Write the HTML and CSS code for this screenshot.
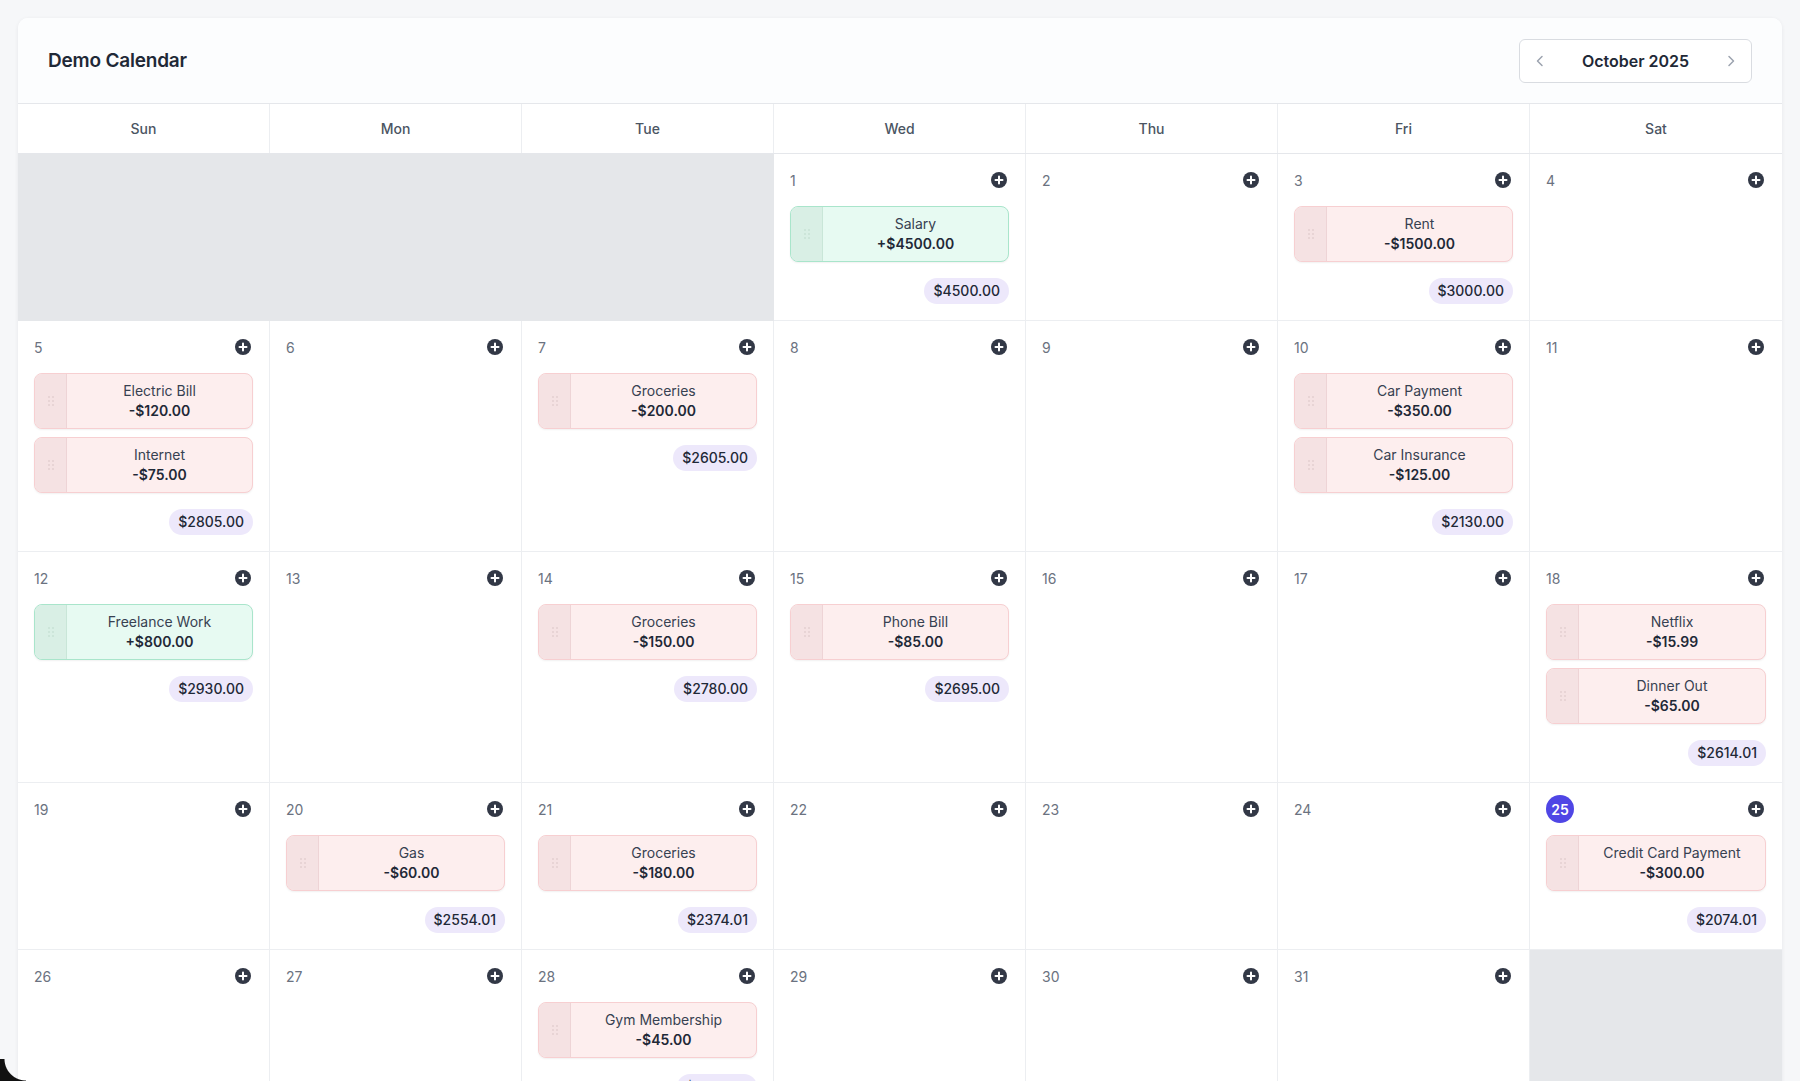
FILE: index.html
```html
<!DOCTYPE html>
<html lang="en">
<head>
    <meta charset="UTF-8">
    <meta name="viewport" content="width=device-width, initial-scale=1.0">
    <title>Demo Calendar</title>
    <link rel="stylesheet" href="styles.css">
</head>
<body>
    <div class="page">
        <div class="calendar">
            <header class="cal-header">
                <h1 class="cal-title">Demo Calendar</h1>
                <div class="month-nav">
                    <button class="nav-btn" aria-label="Previous month">
                        <svg width="14" height="14" viewBox="0 0 14 14"><polyline points="9,2.5 4.5,7 9,11.5" fill="none" stroke="#9ca3af" stroke-width="1.5" stroke-linecap="round" stroke-linejoin="round"/></svg>
                    </button>
                    <span class="month-label">October 2025</span>
                    <button class="nav-btn" aria-label="Next month">
                        <svg width="14" height="14" viewBox="0 0 14 14"><polyline points="5,2.5 9.5,7 5,11.5" fill="none" stroke="#9ca3af" stroke-width="1.5" stroke-linecap="round" stroke-linejoin="round"/></svg>
                    </button>
                </div>
            </header>

            <div class="weekdays">
                <div class="weekday">Sun</div>
                <div class="weekday">Mon</div>
                <div class="weekday">Tue</div>
                <div class="weekday">Wed</div>
                <div class="weekday">Thu</div>
                <div class="weekday">Fri</div>
                <div class="weekday">Sat</div>
            </div>

            <div class="month-grid" id="grid"></div>
        </div>
    </div>
    <div class="screen-corner"></div>

    <script>
        const events = {
            1: [["Salary", 4500]],
            3: [["Rent", -1500]],
            5: [["Electric Bill", -120], ["Internet", -75]],
            7: [["Groceries", -200]],
            10: [["Car Payment", -350], ["Car Insurance", -125]],
            12: [["Freelance Work", 800]],
            14: [["Groceries", -150]],
            15: [["Phone Bill", -85]],
            18: [["Netflix", -15.99], ["Dinner Out", -65]],
            20: [["Gas", -60]],
            21: [["Groceries", -180]],
            25: [["Credit Card Payment", -300]],
            28: [["Gym Membership", -45]]
        };
        const today = 25;
        const firstWeekday = 3;
        const daysInMonth = 31;

        const plusIcon = '<svg width="16" height="16" viewBox="0 0 16 16"><circle cx="8" cy="8" r="8" fill="#323846"/><path d="M8 4.5v7M4.5 8h7" stroke="#fff" stroke-width="2" stroke-linecap="round"/></svg>';
        const gripIcon = '<svg width="6" height="10" viewBox="0 0 6 10"><g fill="currentColor"><circle cx="1" cy="1" r="0.8"/><circle cx="5" cy="1" r="0.8"/><circle cx="1" cy="5" r="0.8"/><circle cx="5" cy="5" r="0.8"/><circle cx="1" cy="9" r="0.8"/><circle cx="5" cy="9" r="0.8"/></g></svg>';

        const money = v => (v < 0 ? "-$" : "+$") + Math.abs(v).toFixed(2);

        const grid = document.getElementById("grid");
        let balance = 0;
        let html = "";

        for (let i = 0; i < firstWeekday; i++) {
            html += '<div class="cell empty"></div>';
        }

        for (let day = 1; day <= daysInMonth; day++) {
            const list = events[day] || [];
            const dayClass = day === today ? "day-num today" : "day-num";
            html += '<div class="cell">';
            html += '<div class="cell-head"><span class="' + dayClass + '">' + day + '</span><button class="add-btn" aria-label="Add">' + plusIcon + '</button></div>';
            if (list.length) {
                html += '<div class="events">';
                for (const [name, amount] of list) {
                    balance += amount;
                    const kind = amount < 0 ? "expense" : "income";
                    html += '<div class="event ' + kind + '"><span class="grip">' + gripIcon + '</span><div class="event-body"><div class="event-name">' + name + '</div><div class="event-amount">' + money(amount) + '</div></div></div>';
                }
                html += '</div>';
                html += '<div class="balance"><span class="balance-pill">$' + balance.toFixed(2) + '</span></div>';
            }
            html += '</div>';
        }

        const filled = firstWeekday + daysInMonth;
        for (let i = filled; i % 7 !== 0; i++) {
            html += '<div class="cell empty"></div>';
        }

        grid.innerHTML = html;
    </script>
</body>
</html>
```

FILE: styles.css
```css
* {
    box-sizing: border-box;
}

body {
    margin: 0;
    background-color: #f6f7f9;
    font-family: Inter, "Noto Sans", sans-serif;
    color: #1f2937;
}

.page {
    padding: 18px 18px 0;
}

.calendar {
    background: #fff;
    border-radius: 10px 10px 0 0;
    box-shadow: 0 1px 4px rgba(15, 23, 42, 0.07);
    overflow: hidden;
}

/* Header */
.cal-header {
    height: 86px;
    display: flex;
    align-items: center;
    justify-content: space-between;
    padding: 0 30px;
    background: #fcfdfe;
    border-bottom: 1px solid #e5e7eb;
}

.cal-title {
    margin: 0;
    font-size: 19px;
    font-weight: 600;
    letter-spacing: -0.2px;
    color: #1f2937;
}

.month-nav {
    width: 233px;
    height: 44px;
    display: flex;
    align-items: center;
    justify-content: space-between;
    padding: 0 12px;
    border: 1px solid #d9dce1;
    border-radius: 6px;
    background: #fff;
}

.nav-btn {
    border: 0;
    background: none;
    padding: 0;
    width: 16px;
    height: 16px;
    display: flex;
    align-items: center;
    justify-content: center;
}

.month-label {
    font-size: 16px;
    font-weight: 600;
    color: #1f2937;
}

/* Weekday row */
.weekdays {
    display: grid;
    grid-template-columns: repeat(7, 1fr);
    border-bottom: 1px solid #e5e7eb;
}

.weekday {
    height: 49px;
    display: flex;
    align-items: center;
    justify-content: center;
    font-size: 14px;
    font-weight: 500;
    color: #4b5563;
    border-right: 1px solid #eceef1;
}

.weekday:last-child {
    border-right: 0;
}

/* Month grid */
.month-grid {
    display: grid;
    grid-template-columns: repeat(7, 1fr);
}

.cell {
    padding: 12px 16px 16px;
    border-right: 1px solid #eceef1;
    border-bottom: 1px solid #eceef1;
    min-height: 140px;
}

.cell:nth-child(7n) {
    border-right: 0;
}

.cell.empty {
    background: #e5e7ea;
    border-color: #e5e7ea;
}

.cell-head {
    height: 28px;
    display: flex;
    align-items: center;
    justify-content: space-between;
    margin-bottom: 12px;
}

.day-num {
    font-size: 14px;
    color: #6b7280;
}

.day-num.today {
    width: 28px;
    height: 28px;
    border-radius: 50%;
    background: #4f46e5;
    color: #fff;
    font-weight: 600;
    display: flex;
    align-items: center;
    justify-content: center;
}

.add-btn {
    border: 0;
    background: none;
    padding: 0;
    width: 20px;
    height: 20px;
    display: flex;
    align-items: center;
    justify-content: center;
}

/* Events */
.events {
    display: flex;
    flex-direction: column;
    gap: 8px;
}

.event {
    display: flex;
    border-radius: 8px;
    border: 1px solid;
    overflow: hidden;
    box-shadow: 0 1px 2px rgba(0, 0, 0, 0.06);
}

.event.expense {
    background: #fdeeee;
    border-color: #f7cfd1;
}

.event.income {
    background: #e7faf2;
    border-color: #a9e5cb;
}

.grip {
    width: 32px;
    flex-shrink: 0;
    display: flex;
    align-items: center;
    justify-content: center;
}

.expense .grip {
    background: #f5e2e3;
    border-right: 1px solid #eed4d6;
    color: #d9c1c3;
}

.income .grip {
    background: #d9efe5;
    border-right: 1px solid #c9e6d8;
    color: #bcd9cb;
}

.event-body {
    flex: 1;
    padding: 7px 8px;
    text-align: center;
    font-size: 14px;
    line-height: 20px;
}

.event-name {
    color: #374151;
}

.event-amount {
    font-weight: 600;
    color: #1f2937;
}

.balance {
    display: flex;
    justify-content: flex-end;
    margin-top: 16px;
}

.balance-pill {
    background: #ede8fb;
    color: #1f2937;
    font-size: 14px;
    font-weight: 500;
    line-height: 18px;
    padding: 4px 9px;
    border-radius: 13px;
}

/* Rounded corner of the recording window */
.screen-corner {
    position: fixed;
    left: 0;
    bottom: 0;
    width: 26px;
    height: 22px;
    background: radial-gradient(circle at 100% 0, transparent 21px, #111 22px);
}
```
